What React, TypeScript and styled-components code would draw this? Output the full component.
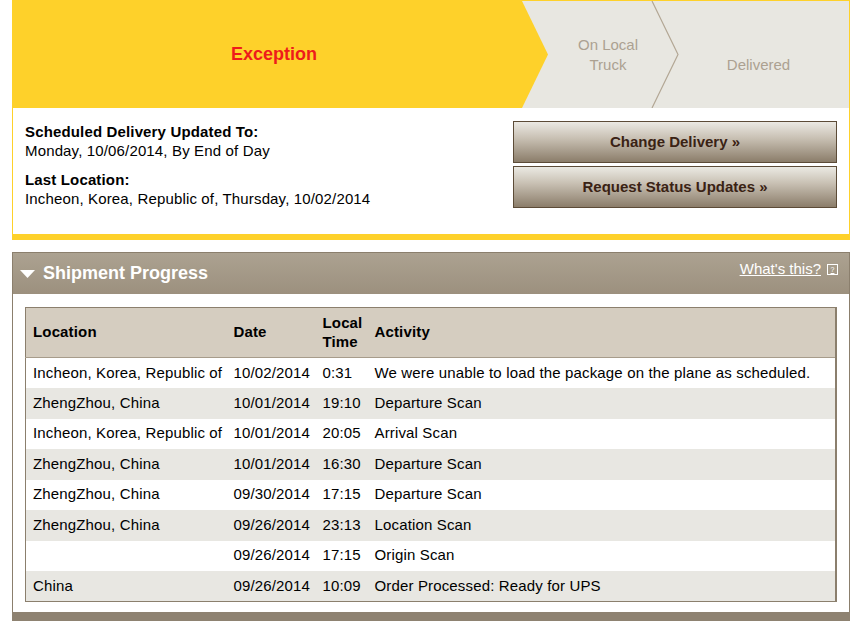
import React from "react"
import styled, { createGlobalStyle } from "styled-components"

const GlobalStyle = createGlobalStyle`
    html, body {
        margin: 0;
        padding: 0;
        background: #fff;
        font-family: "Liberation Sans", Arial, sans-serif;
        color: #000;
    }
`

const Page = styled.div`
    width: 838px;
    margin-left: 12px;
`

const StatusPanel = styled.div`
    border: 1px solid #fed12a;
    border-bottom-width: 6px;
    background: #fff;
`

const StepBar = styled.div`
    position: relative;
    display: flex;
    height: 107px;
    background: #e8e7e1;
`

const CurrentStep = styled.div`
    flex: 0 0 536px;
    margin-left: -1px;
    padding-right: 12px;
    box-sizing: border-box;
    display: flex;
    align-items: center;
    justify-content: center;
    background: #fed12a;
    clip-path: polygon(0 0, 510px 0, 536px 50%, 510px 100%, 0 100%);
    color: #ee1b1b;
    font-size: 18px;
    font-weight: bold;
`

const Step = styled.div<{ $width?: number }>`
    position: relative;
    flex: ${(p) => (p.$width ? `0 0 ${p.$width}px` : "1")};
    display: flex;
    align-items: center;
    justify-content: center;
    padding-top: 20px;
    box-sizing: border-box;
    color: #aca191;
    font-size: 15px;
    line-height: 20px;
    text-align: center;
`

const StepDivider = styled.svg`
    position: absolute;
    right: -12px;
    top: 0;
`

const InfoArea = styled.div`
    display: flex;
    justify-content: space-between;
    height: 126px;
    padding: 13px 12px 0 12px;
    box-sizing: border-box;
`

const InfoText = styled.div`
    padding-top: 1px;
    font-size: 15px;
    line-height: 19px;
    letter-spacing: 0.15px;
    h4 {
        margin: 0;
        font-size: 15px;
        font-weight: bold;
    }
    p {
        margin: 0 0 10px 0;
    }
`

const ButtonStack = styled.div`
    display: flex;
    flex-direction: column;
    gap: 3px;
    width: 324px;
`

const ActionButton = styled.button`
    height: 42px;
    padding-bottom: 2px;
    border: 1px solid #5c4b37;
    background: linear-gradient(to bottom, #ebe9e3 0%, #c9c1b4 40%, #8b7d6a 100%);
    color: #3a2214;
    font-family: "Liberation Sans", Arial, sans-serif;
    font-size: 15px;
    font-weight: bold;
    cursor: pointer;
`

const Section = styled.div`
    margin-top: 12px;
    border: 1px solid #8b7f6d;
    border-bottom: none;
`

const SectionHeader = styled.div`
    display: flex;
    align-items: center;
    justify-content: space-between;
    height: 41px;
    padding: 0 11px 0 7px;
    background: linear-gradient(to bottom, #aca291, #9c907e);
    color: #fff;
`

const SectionTitle = styled.h2`
    display: flex;
    align-items: center;
    gap: 8px;
    margin: 0;
    font-size: 18px;
    font-weight: bold;
`

const HelpLink = styled.a`
    display: flex;
    align-items: center;
    gap: 6px;
    margin-top: -11px;
    color: #fff;
    font-size: 15px;
    span {
        text-decoration: underline;
    }
`

const HelpIcon = styled.span`
    display: inline-flex;
    align-items: center;
    justify-content: center;
    width: 9px;
    height: 9px;
    margin-top: 3px;
    border: 1px solid #fff;
    font-size: 7px;
    line-height: 1;
    text-decoration: none !important;
`

const SectionBody = styled.div`
    padding: 13px 12px 10px 12px;
    background: #fff;
`

const ProgressTable = styled.table`
    width: 100%;
    border-collapse: collapse;
    border: 1px solid #8b7f6d;
    border-right-width: 2px;
    font-size: 15px;
    letter-spacing: 0.15px;
    th {
        box-sizing: border-box;
        background: #d5cdc0;
        height: 50px;
        padding: 0 0 2px 7px;
        text-align: left;
        font-weight: bold;
        line-height: 19px;
        border-bottom: 1px solid #a79c8b;
    }
    td {
        padding: 0 0 2px 7px;
        white-space: nowrap;
    }
`

const Row = styled.tr<{ $alt: boolean }>`
    height: 30.5px;
    background: ${(p) => (p.$alt ? "#e8e7e2" : "#fff")};
`

const NextSection = styled.div`
    height: 30px;
    background: #8e8271;
`

const activity = [
    { loc: "Incheon, Korea, Republic of", date: "10/02/2014", time: "0:31", text: "We were unable to load the package on the plane as scheduled." },
    { loc: "ZhengZhou, China", date: "10/01/2014", time: "19:10", text: "Departure Scan" },
    { loc: "Incheon, Korea, Republic of", date: "10/01/2014", time: "20:05", text: "Arrival Scan" },
    { loc: "ZhengZhou, China", date: "10/01/2014", time: "16:30", text: "Departure Scan" },
    { loc: "ZhengZhou, China", date: "09/30/2014", time: "17:15", text: "Departure Scan" },
    { loc: "ZhengZhou, China", date: "09/26/2014", time: "23:13", text: "Location Scan" },
    { loc: "", date: "09/26/2014", time: "17:15", text: "Origin Scan" },
    { loc: "China", date: "09/26/2014", time: "10:09", text: "Order Processed: Ready for UPS" },
]

export default function App() {
    return (
        <>
            <GlobalStyle />
            <Page>
                <StatusPanel>
                    <StepBar>
                        <CurrentStep>Exception</CurrentStep>
                        <Step $width={120}>
                            <div style={{ marginTop: -20 }}>
                                On Local
                                <br />
                                Truck
                            </div>
                            <StepDivider width="30" height="107" viewBox="0 0 30 107">
                                <polyline points="2,0 28,53.5 2,107" fill="none" stroke="#b3a795" strokeWidth="1.2" />
                            </StepDivider>
                        </Step>
                        <Step>Delivered</Step>
                    </StepBar>
                    <InfoArea>
                        <InfoText>
                            <h4>Scheduled Delivery Updated To:</h4>
                            <p>Monday, 10/06/2014, By End of Day</p>
                            <h4>Last Location:</h4>
                            <p>Incheon, Korea, Republic of, Thursday, 10/02/2014</p>
                        </InfoText>
                        <ButtonStack>
                            <ActionButton>Change Delivery »</ActionButton>
                            <ActionButton>Request Status Updates »</ActionButton>
                        </ButtonStack>
                    </InfoArea>
                </StatusPanel>

                <Section>
                    <SectionHeader>
                        <SectionTitle>
                            <svg width="15" height="8" viewBox="0 0 15 8">
                                <polygon points="0,0 15,0 7.5,8" fill="#fff" />
                            </svg>
                            Shipment Progress
                        </SectionTitle>
                        <HelpLink href="#">
                            <span>What's this?</span>
                            <HelpIcon>?</HelpIcon>
                        </HelpLink>
                    </SectionHeader>
                    <SectionBody>
                        <ProgressTable>
                            <colgroup>
                                <col style={{ width: 201 }} />
                                <col style={{ width: 89 }} />
                                <col style={{ width: 52 }} />
                                <col />
                            </colgroup>
                            <thead>
                                <tr>
                                    <th>Location</th>
                                    <th>Date</th>
                                    <th>
                                        Local
                                        <br />
                                        Time
                                    </th>
                                    <th>Activity</th>
                                </tr>
                            </thead>
                            <tbody>
                                {activity.map((a, i) => (
                                    <Row key={i} $alt={i % 2 === 1}>
                                        <td>{a.loc}</td>
                                        <td>{a.date}</td>
                                        <td>{a.time}</td>
                                        <td>{a.text}</td>
                                    </Row>
                                ))}
                            </tbody>
                        </ProgressTable>
                    </SectionBody>
                </Section>
                <NextSection />
            </Page>
        </>
    )
}
